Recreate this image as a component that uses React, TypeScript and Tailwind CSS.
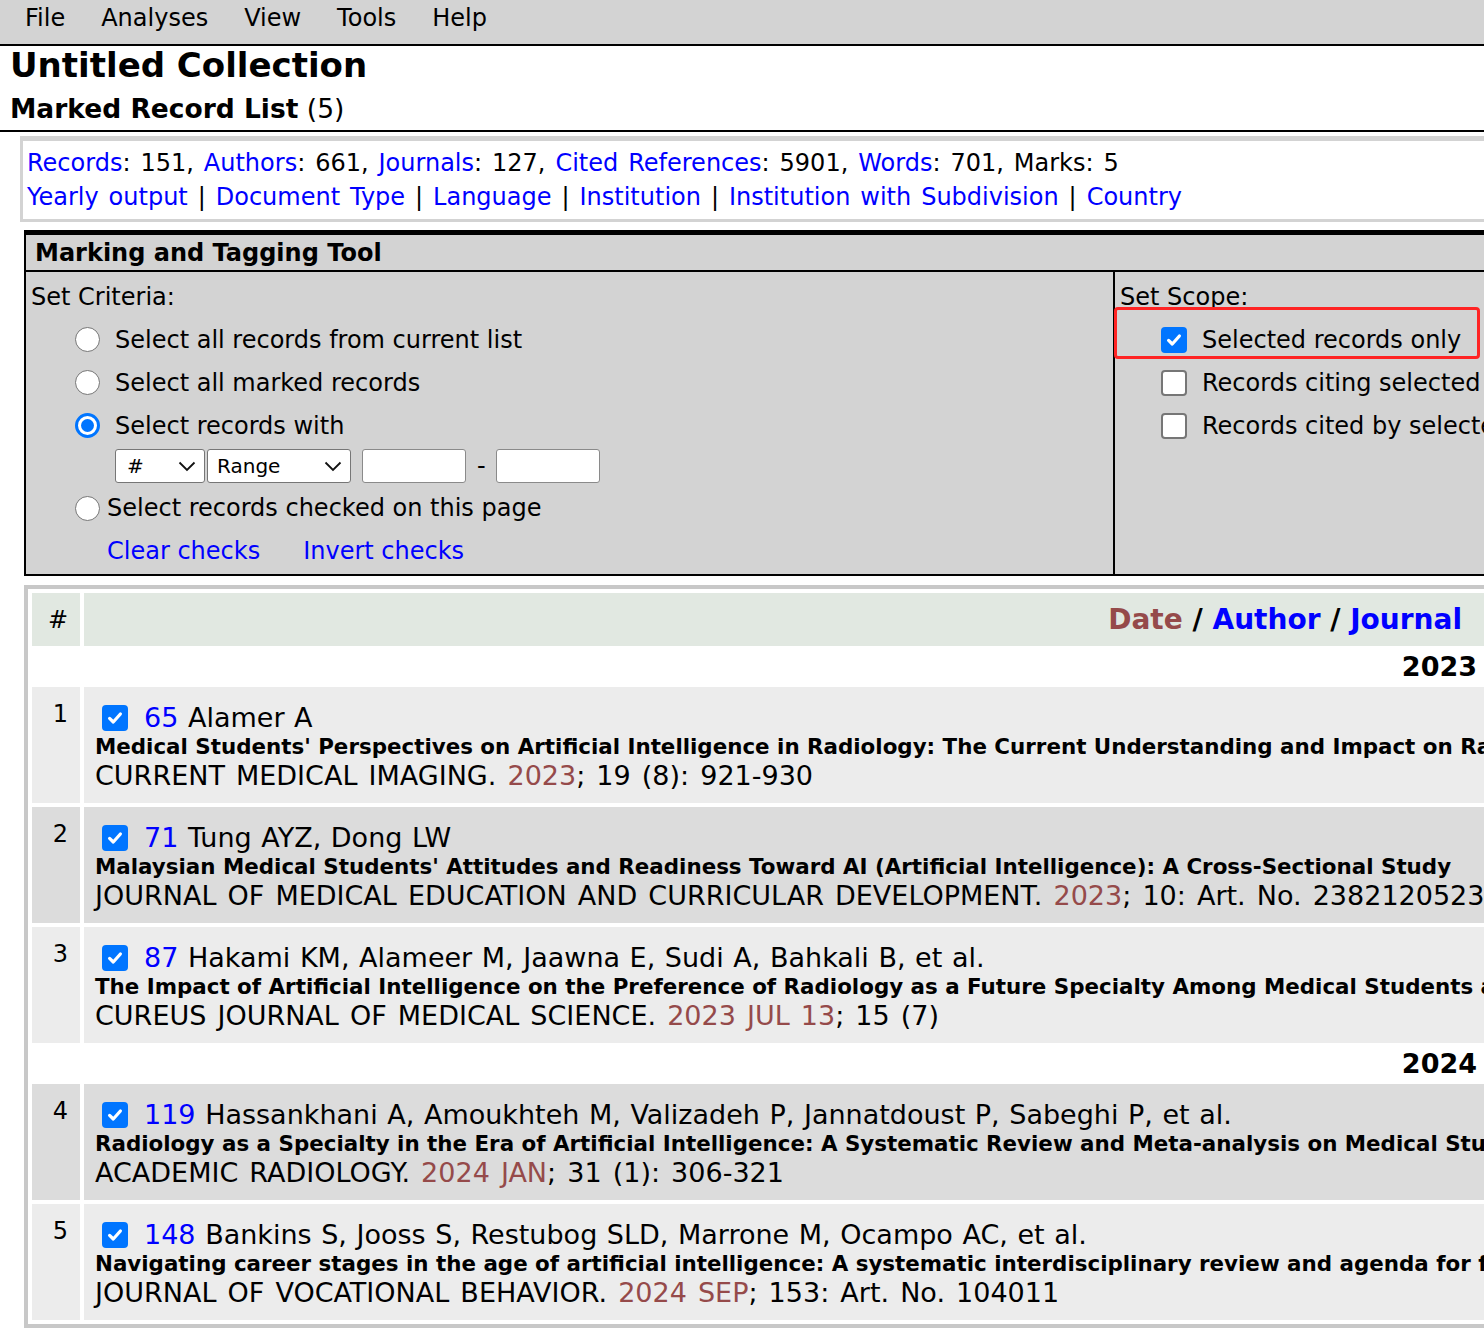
import React from "react";

function CheckBox({ checked }: { checked: boolean }) {
  return checked ? (
    <span className="inline-flex h-[26px] w-[26px] shrink-0 items-center justify-center rounded-[4px] bg-[#0075ff]">
      <svg width="18" height="18" viewBox="0 0 18 18">
        <path d="M3.6 9.4 L7.3 13 L14.4 5" fill="none" stroke="white" strokeWidth="3.2" strokeLinecap="round" strokeLinejoin="round" />
      </svg>
    </span>
  ) : (
    <span className="inline-block h-[26px] w-[26px] shrink-0 rounded-[4px] border-[2px] border-[#767676] bg-white" />
  );
}

function Radio({ checked }: { checked: boolean }) {
  return checked ? (
    <span className="inline-flex h-[25px] w-[25px] shrink-0 items-center justify-center rounded-full border-[3px] border-[#0075ff] bg-white">
      <span className="h-[13px] w-[13px] rounded-full bg-[#0075ff]" />
    </span>
  ) : (
    <span className="inline-block h-[25px] w-[25px] shrink-0 rounded-full border-[1.5px] border-[#767676] bg-white" />
  );
}

function Chevron() {
  return (
    <svg width="18" height="11" viewBox="0 0 18 11">
      <path d="M1.5 1.5 L9 9 L16.5 1.5" fill="none" stroke="#111" strokeWidth="1.8" />
    </svg>
  );
}

type Rec = {
  n: number;
  id: string;
  authors: string;
  title: string;
  journal: string;
  date: string;
  rest: string;
  dark: boolean;
};

const recs2023: Rec[] = [
  {
    n: 1,
    id: "65",
    authors: "Alamer A",
    title:
      "Medical Students' Perspectives on Artificial Intelligence in Radiology: The Current Understanding and Impact on Radiology as a Future Specialty Choice",
    journal: "CURRENT MEDICAL IMAGING. ",
    date: "2023",
    rest: "; 19 (8): 921-930",
    dark: false,
  },
  {
    n: 2,
    id: "71",
    authors: "Tung AYZ, Dong LW",
    title:
      "Malaysian Medical Students' Attitudes and Readiness Toward AI (Artificial Intelligence): A Cross-Sectional Study",
    journal: "JOURNAL OF MEDICAL EDUCATION AND CURRICULAR DEVELOPMENT. ",
    date: "2023",
    rest: "; 10: Art. No. 23821205231179534",
    dark: true,
  },
  {
    n: 3,
    id: "87",
    authors: "Hakami KM, Alameer M, Jaawna E, Sudi A, Bahkali B, et al.",
    title:
      "The Impact of Artificial Intelligence on the Preference of Radiology as a Future Specialty Among Medical Students at Jazan University",
    journal: "CUREUS JOURNAL OF MEDICAL SCIENCE. ",
    date: "2023 JUL 13",
    rest: "; 15 (7)",
    dark: false,
  },
];

const recs2024: Rec[] = [
  {
    n: 4,
    id: "119",
    authors: "Hassankhani A, Amoukhteh M, Valizadeh P, Jannatdoust P, Sabeghi P, et al.",
    title:
      "Radiology as a Specialty in the Era of Artificial Intelligence: A Systematic Review and Meta-analysis on Medical Students, Residents, and Radiologists",
    journal: "ACADEMIC RADIOLOGY. ",
    date: "2024 JAN",
    rest: "; 31 (1): 306-321",
    dark: true,
  },
  {
    n: 5,
    id: "148",
    authors: "Bankins S, Jooss S, Restubog SLD, Marrone M, Ocampo AC, et al.",
    title:
      "Navigating career stages in the age of artificial intelligence: A systematic interdisciplinary review and agenda for future research",
    journal: "JOURNAL OF VOCATIONAL BEHAVIOR. ",
    date: "2024 SEP",
    rest: "; 153: Art. No. 104011",
    dark: false,
  },
];

function RecordRow({ r }: { r: Rec }) {
  const bg = r.dark ? "bg-[#dcdcdc]" : "bg-[#ececec]";
  return (
    <>
      <div className={`${bg} h-[116px] pr-[12px] pt-[12px] text-right text-[24px] leading-[30px]`}>{r.n}</div>
      <div className={`${bg} h-[116px] overflow-hidden whitespace-nowrap pl-[11px] pt-[16px]`}>
        <div className="flex h-[30px] items-center text-[27px] leading-[30px] [word-spacing:1px]">
          <span className="ml-[7px] mr-[16px] flex items-center">
            <CheckBox checked />
          </span>
          <span className="text-[#0000ff]">{r.id}</span>
          <span>&nbsp;{r.authors}</span>
        </div>
        <div className="text-[21.4px] font-bold leading-[28px]">{r.title}</div>
        <div className="text-[27px] leading-[30px] [word-spacing:2.5px]">
          {r.journal}
          <span className="text-[#954a4a]">{r.date}</span>
          {r.rest}
        </div>
      </div>
    </>
  );
}

function YearRow({ y }: { y: string }) {
  return (
    <div className="col-span-2 h-[33px] bg-white pr-[14px] text-right text-[27px] font-bold leading-[33px]">{y}</div>
  );
}

export default function App() {
  const link = "text-[#0000ff]";
  return (
    <div className="min-h-[1330px] w-[1484px] overflow-hidden bg-white font-['DejaVu_Sans',sans-serif] text-black">
      {/* Menu bar */}
      <div className="flex h-[46px] gap-[36px] border-b-2 border-black bg-[#d3d3d3] pl-[25px] pt-[4px] text-[24px] leading-[28px]">
        <span>File</span>
        <span>Analyses</span>
        <span>View</span>
        <span>Tools</span>
        <span>Help</span>
      </div>

      {/* Headings */}
      <div className="pl-[10px]">
        <div className="text-[34px] font-bold leading-[38px]">Untitled Collection</div>
        <div className="mt-[8px] text-[26.5px] leading-[34px]">
          <span className="font-bold">Marked Record List</span> (5)
        </div>
      </div>
      <div className="mt-[4px] h-[2px] w-full bg-black" />

      {/* Stats box */}
      <div className="ml-[20px] mt-[4px] w-[1480px] whitespace-nowrap border-[3px] border-t-[5px] border-[#d3d3d3] pb-[5px] pl-[4px] pt-[5px] text-[24px] leading-[34px] [word-spacing:2.3px]">
        <div>
          <span className={link}>Records</span>: 151, <span className={link}>Authors</span>: 661,{" "}
          <span className={link}>Journals</span>: 127, <span className={link}>Cited References</span>: 5901,{" "}
          <span className={link}>Words</span>: 701, Marks: 5
        </div>
        <div>
          <span className={link}>Yearly output</span> | <span className={link}>Document Type</span> |{" "}
          <span className={link}>Language</span> | <span className={link}>Institution</span> |{" "}
          <span className={link}>Institution with Subdivision</span> | <span className={link}>Country</span>
        </div>
      </div>

      {/* Marking and Tagging Tool */}
      <div className="ml-[24px] mt-[8px] w-[1480px] whitespace-nowrap border-b-2 border-l-2 border-t-[5px] border-black bg-[#d3d3d3] text-[24px]">
        <div className="h-[37px] border-b-2 border-black pl-[9px] pt-[2px] font-bold leading-[32px]">
          Marking and Tagging Tool
        </div>
        <div className="flex">
          {/* left column */}
          <div className="w-[1089px] shrink-0 border-r-2 border-black pb-[3px] pt-[4px]">
            <div className="flex h-[42px] items-center pl-[5px]">Set Criteria:</div>
            <div className="flex h-[43px] items-center pl-[49px]">
              <Radio checked={false} />
              <span className="ml-[15px]">Select all records from current list</span>
            </div>
            <div className="flex h-[43px] items-center pl-[49px]">
              <Radio checked={false} />
              <span className="ml-[15px]">Select all marked records</span>
            </div>
            <div className="flex h-[43px] items-center pl-[49px]">
              <Radio checked />
              <span className="ml-[15px]">Select records with</span>
            </div>
            <div className="flex h-[38px] items-center pl-[89px]">
              <div className="flex h-[34px] w-[90px] items-center justify-between rounded-[3px] border border-[#767676] bg-white pl-[11px] pr-[8px] text-[20px]">
                <span>#</span>
                <Chevron />
              </div>
              <div className="ml-[2px] flex h-[34px] w-[144px] items-center justify-between rounded-[3px] border border-[#767676] bg-white pl-[9px] pr-[8px] text-[20px]">
                <span>Range</span>
                <Chevron />
              </div>
              <div className="ml-[11px] h-[34px] w-[104px] rounded-[3px] border-[1.5px] border-[#8a8a8a] bg-white" />
              <span className="mx-[11px] w-[8px] text-center">-</span>
              <div className="h-[34px] w-[104px] rounded-[3px] border-[1.5px] border-[#8a8a8a] bg-white" />
            </div>
            <div className="flex h-[46px] items-center pl-[49px]">
              <Radio checked={false} />
              <span className="ml-[7px]">Select records checked on this page</span>
            </div>
            <div className="flex h-[40px] items-center pl-[81px]">
              <span className={link}>Clear checks</span>
              <span className={`${link} ml-[43px]`}>Invert checks</span>
            </div>
          </div>
          {/* right column */}
          <div className="relative flex-1 pt-[4px]">
            <div className="flex h-[42px] items-center pl-[5px]">Set Scope:</div>
            <div className="flex h-[43px] items-center pl-[46px]">
              <CheckBox checked />
              <span className="ml-[15px]">Selected records only</span>
            </div>
            <div className="flex h-[43px] items-center pl-[46px]">
              <CheckBox checked={false} />
              <span className="ml-[15px]">Records citing selected records</span>
            </div>
            <div className="flex h-[43px] items-center pl-[46px]">
              <CheckBox checked={false} />
              <span className="ml-[15px]">Records cited by selected records</span>
            </div>
            <div className="absolute left-[-1px] top-[35px] h-[52px] w-[366px] rounded-[4px] border-[3px] border-[#ff2424]" />
          </div>
        </div>
      </div>

      {/* Records table */}
      <div className="ml-[24px] mt-[9px] w-[1475px] border-[4px] border-[#c8c8c8] bg-white p-[4px]">
        <div className="grid grid-cols-[48px_minmax(0,1fr)] gap-[4px]">
          <div className="flex h-[53px] items-center justify-end bg-[#e1e8e1] pr-[12px] text-[24px]">#</div>
          <div className="flex h-[53px] items-center justify-end whitespace-nowrap bg-[#e1e8e1] pr-[29px] text-[28px] font-bold">
            <span className="text-[#954a4a]">Date</span>
            <span>&nbsp;/&nbsp;</span>
            <span className="text-[#0000ff]">Author</span>
            <span>&nbsp;/&nbsp;</span>
            <span className="text-[#0000ff]">Journal</span>
          </div>
          <YearRow y="2023" />
          {recs2023.map((r) => (
            <RecordRow key={r.n} r={r} />
          ))}
          <YearRow y="2024" />
          {recs2024.map((r) => (
            <RecordRow key={r.n} r={r} />
          ))}
        </div>
      </div>
    </div>
  );
}
